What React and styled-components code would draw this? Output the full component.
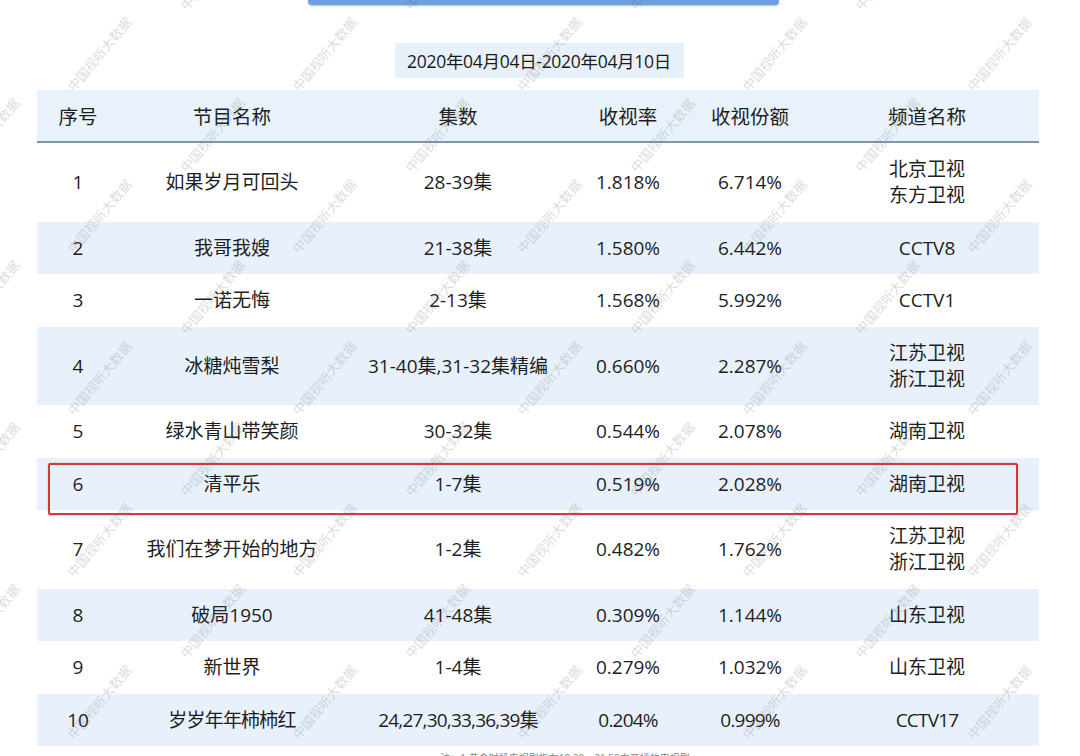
import styled, { createGlobalStyle } from 'styled-components';

const GlobalStyle = createGlobalStyle`
  html, body {
    margin: 0;
    padding: 0;
    background: #ffffff;
  }
  body {
    font-family: "Open Sans", "Noto Sans CJK SC", sans-serif;
    color: #1e1e1e;
    overflow: hidden;
  }
`;

const rows = [
  { no: 1, name: '如果岁月可回头', ep: '28-39集', rate: '1.818%', share: '6.714%', ch: ['北京卫视', '东方卫视'] },
  { no: 2, name: '我哥我嫂', ep: '21-38集', rate: '1.580%', share: '6.442%', ch: ['CCTV8'] },
  { no: 3, name: '一诺无悔', ep: '2-13集', rate: '1.568%', share: '5.992%', ch: ['CCTV1'] },
  { no: 4, name: '冰糖炖雪梨', ep: '31-40集,31-32集精编', rate: '0.660%', share: '2.287%', ch: ['江苏卫视', '浙江卫视'] },
  { no: 5, name: '绿水青山带笑颜', ep: '30-32集', rate: '0.544%', share: '2.078%', ch: ['湖南卫视'] },
  { no: 6, name: '清平乐', ep: '1-7集', rate: '0.519%', share: '2.028%', ch: ['湖南卫视'], marked: true },
  { no: 7, name: '我们在梦开始的地方', ep: '1-2集', rate: '0.482%', share: '1.762%', ch: ['江苏卫视', '浙江卫视'] },
  { no: 8, name: '破局1950', ep: '41-48集', rate: '0.309%', share: '1.144%', ch: ['山东卫视'] },
  { no: 9, name: '新世界', ep: '1-4集', rate: '0.279%', share: '1.032%', ch: ['山东卫视'] },
  { no: 10, name: '岁岁年年柿柿红', ep: '24,27,30,33,36,39集', rate: '0.204%', share: '0.999%', ch: ['CCTV17'], narrow: true },
];

const COLS = '82px 226px 226px 114px 130px 1fr';

const Page = styled.div`
  position: relative;
  width: 1080px;
  height: 756px;
  overflow: hidden;
  background: #fff;
`;

const TopBar = styled.div`
  width: 471px;
  height: 5px;
  margin-left: 308px;
  background: #6f9fdc;
  border-radius: 0 0 4px 4px;
  box-shadow: 0 1px 2px rgba(80, 120, 170, 0.45);
`;

const DateRow = styled.div`
  display: flex;
  justify-content: center;
  margin-top: 38px;
`;

const DateBox = styled.div`
  width: 289px;
  height: 35px;
  margin-left: -2px;
  background: #e8f1fa;
  display: flex;
  align-items: center;
  justify-content: center;
  font-size: 17.5px;
  letter-spacing: -0.3px;
  color: #1a1a1a;
`;

const Table = styled.div`
  width: 1002px;
  margin-left: 37px;
  margin-top: 12px;
`;

const HeadRow = styled.div`
  display: grid;
  grid-template-columns: ${COLS};
  height: 51px;
  align-items: center;
  background: #e9f2fb;
  border-bottom: 2px solid #7d95aa;
  font-size: 19.5px;
`;

const Row = styled.div`
  position: relative;
  display: grid;
  grid-template-columns: ${COLS};
  align-items: center;
  padding: 13.25px 0;
  line-height: 26px;
  font-size: 19px;
  background: ${(p) => (p.$shade ? '#e8f1fb' : '#ffffff')};
`;

const Cell = styled.div`
  text-align: center;
  white-space: nowrap;
  letter-spacing: ${(p) => (p.$narrow ? '-0.8px' : '0')};
`;

const Mark = styled.div`
  position: absolute;
  left: 11px;
  right: 21px;
  top: 5px;
  bottom: -5px;
  border: 2px solid #d8363c;
  border-radius: 2px;
  box-shadow: 0 0 2px rgba(200, 40, 40, 0.35);
  pointer-events: none;
  z-index: 2;
`;

const Note = styled.div`
  margin-top: 4px;
  padding-left: 50px;
  text-align: center;
  font-size: 10px;
  color: #888;
`;

const Watermarks = styled.div`
  position: absolute;
  inset: -40px -100px 0 -60px;
  display: flex;
  flex-direction: column;
  gap: 62px;
  pointer-events: none;
  z-index: 3;
`;

const WmLine = styled.div`
  display: flex;
  gap: 125px;
  padding-left: ${(p) => (p.$odd ? 112 : 0)}px;
`;

const Wm = styled.span`
  flex: none;
  width: 100px;
  font-family: "Noto Sans CJK SC", sans-serif;
  font-size: 13px;
  color: rgba(110, 110, 110, 0.26);
  transform: rotate(-50deg);
  white-space: nowrap;
`;

export default function App() {
  const lines = Array.from({ length: 10 });
  const items = Array.from({ length: 6 });
  return (
    <Page>
      <GlobalStyle />
      <TopBar />
      <DateRow>
        <DateBox>2020年04月04日-2020年04月10日</DateBox>
      </DateRow>
      <Table>
        <HeadRow>
          <Cell>序号</Cell>
          <Cell>节目名称</Cell>
          <Cell>集数</Cell>
          <Cell>收视率</Cell>
          <Cell>收视份额</Cell>
          <Cell>频道名称</Cell>
        </HeadRow>
        {rows.map((r, i) => (
          <Row key={r.no} $shade={i % 2 === 1}>
            <Cell>{r.no}</Cell>
            <Cell $narrow={r.narrow}>{r.name}</Cell>
            <Cell $narrow={r.narrow}>{r.ep}</Cell>
            <Cell $narrow={r.narrow}>{r.rate}</Cell>
            <Cell $narrow={r.narrow}>{r.share}</Cell>
            <Cell $narrow={r.narrow}>
              {r.ch.map((c) => (
                <div key={c}>{c}</div>
              ))}
            </Cell>
            {r.marked && <Mark />}
          </Row>
        ))}
      </Table>
      <Note>注：1.黄金时段电视剧指在19:30—21:59中开播的电视剧</Note>
      <Watermarks>
        {lines.map((_, li) => (
          <WmLine key={li} $odd={li % 2 === 1}>
            {items.map((__, ii) => (
              <Wm key={ii}>中国视听大数据</Wm>
            ))}
          </WmLine>
        ))}
      </Watermarks>
    </Page>
  );
}
